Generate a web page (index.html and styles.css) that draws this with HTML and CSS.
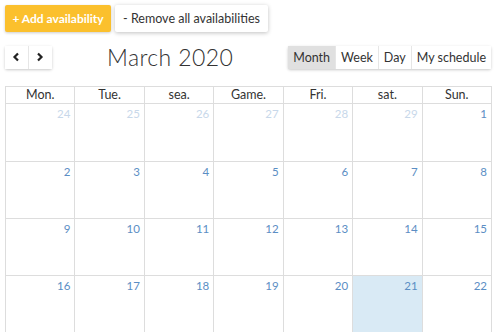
FILE: index.html
```html
<!DOCTYPE html>
<html lang="en">
<head>
  <meta charset="UTF-8" />
  <title>Availability calendar</title>
  <link rel="stylesheet" href="styles.css">
</head>
<body>
  <div class="page">
    <div class="actions">
      <button class="btn btn-add">+ Add availability</button>
      <button class="btn btn-remove">- Remove all availabilities</button>
    </div>

    <div class="toolbar">
      <div class="nav-group">
        <button class="nav-btn">
          <svg width="8" height="10" viewBox="0 0 8 10"><path d="M6 1.5 L2.5 5 L6 8.5" fill="none" stroke="#222" stroke-width="2.2"/></svg>
        </button>
        <button class="nav-btn">
          <svg width="8" height="10" viewBox="0 0 8 10"><path d="M2 1.5 L5.5 5 L2 8.5" fill="none" stroke="#222" stroke-width="2.2"/></svg>
        </button>
      </div>
      <h2 class="title">March 2020</h2>
      <div class="view-group">
        <button class="view-btn active">Month</button>
        <button class="view-btn">Week</button>
        <button class="view-btn">Day</button>
        <button class="view-btn">My schedule</button>
      </div>
    </div>

    <div class="calendar" id="calendar">
      <div class="head">Mon.</div>
      <div class="head">Tue.</div>
      <div class="head">sea.</div>
      <div class="head">Game.</div>
      <div class="head">Fri.</div>
      <div class="head">sat.</div>
      <div class="head">Sun.</div>
    </div>
  </div>

  <script>
    const cal = document.getElementById("calendar");
    const days = [24, 25, 26, 27, 28, 29, 1];
    for (let d = 2; d <= 22; d++) days.push(d);

    days.forEach((d, i) => {
      const cell = document.createElement("div");
      cell.className = "day";
      if (i < 6) cell.classList.add("other");
      if (d === 21 && i > 6) cell.classList.add("today");
      cell.textContent = d;
      cal.appendChild(cell);
    });
  </script>
</body>
</html>
```

FILE: styles.css
```css
* {
  margin: 0;
  padding: 0;
  box-sizing: border-box;
  font-family: 'Lato', sans-serif;
}

body {
  background: #ffffff;
  color: #333;
}

.page {
  width: 487px;
  margin-left: 5px;
  padding-top: 5px;
}

.actions {
  display: flex;
  gap: 4px;
}

.btn {
  height: 27px;
  padding: 0 8px;
  border: none;
  border-radius: 2px;
  font-size: 12.5px;
  white-space: nowrap;
  cursor: pointer;
}

.btn-add {
  background: #fbc02d;
  color: #fff;
  font-weight: 700;
  font-size: 12px;
  width: 106px;
  padding: 0;
  box-shadow: 0 1px 3px rgba(0, 0, 0, 0.2);
}

.btn-remove {
  background: #fff;
  color: #333;
  width: 153px;
  box-shadow: 0 1px 4px rgba(0, 0, 0, 0.25);
}

.toolbar {
  display: flex;
  align-items: center;
  margin-top: 13px;
  height: 24px;
}

.nav-group, .view-group {
  display: flex;
  box-shadow: 0 1px 3px rgba(0, 0, 0, 0.22);
  border-radius: 2px;
}

.nav-btn {
  width: 23.5px;
  height: 23px;
  background: #fff;
  border: none;
  border-right: 1px solid #e6e6e6;
  display: flex;
  align-items: center;
  justify-content: center;
}

.nav-btn:last-child {
  border-right: none;
}

.title {
  font-weight: 300;
  font-size: 23px;
  color: #333;
  margin-left: 55px;
  flex: 1;
  letter-spacing: 0.4px;
}

.view-group {
  margin-right: 1px;
}

.view-btn {
  height: 23px;
  padding: 0 5px;
  background: #fff;
  border: none;
  border-right: 1px solid #e6e6e6;
  font-size: 12.5px;
  color: #333;
}

.view-btn:last-child {
  border-right: none;
}

.view-btn.active {
  background: #e0e0e0;
}

.calendar {
  display: grid;
  grid-template-columns: repeat(7, 1fr);
  grid-template-rows: 17px 58px 57px 57px 57px;
  margin-top: 17px;
  border-top: 1px solid #ddd;
  border-left: 1px solid #ddd;
}

.head, .day {
  border-right: 1px solid #ddd;
  border-bottom: 1px solid #ddd;
}

.head {
  text-align: center;
  font-size: 12.5px;
  line-height: 16px;
  color: #333;
}

.day {
  text-align: right;
  padding: 3px 4px 0 0;
  font-size: 11.5px;
  color: #5b8ec4;
}

.day.other {
  color: #c8d8ea;
}

.day.today {
  background: #d9eaf5;
}
```
